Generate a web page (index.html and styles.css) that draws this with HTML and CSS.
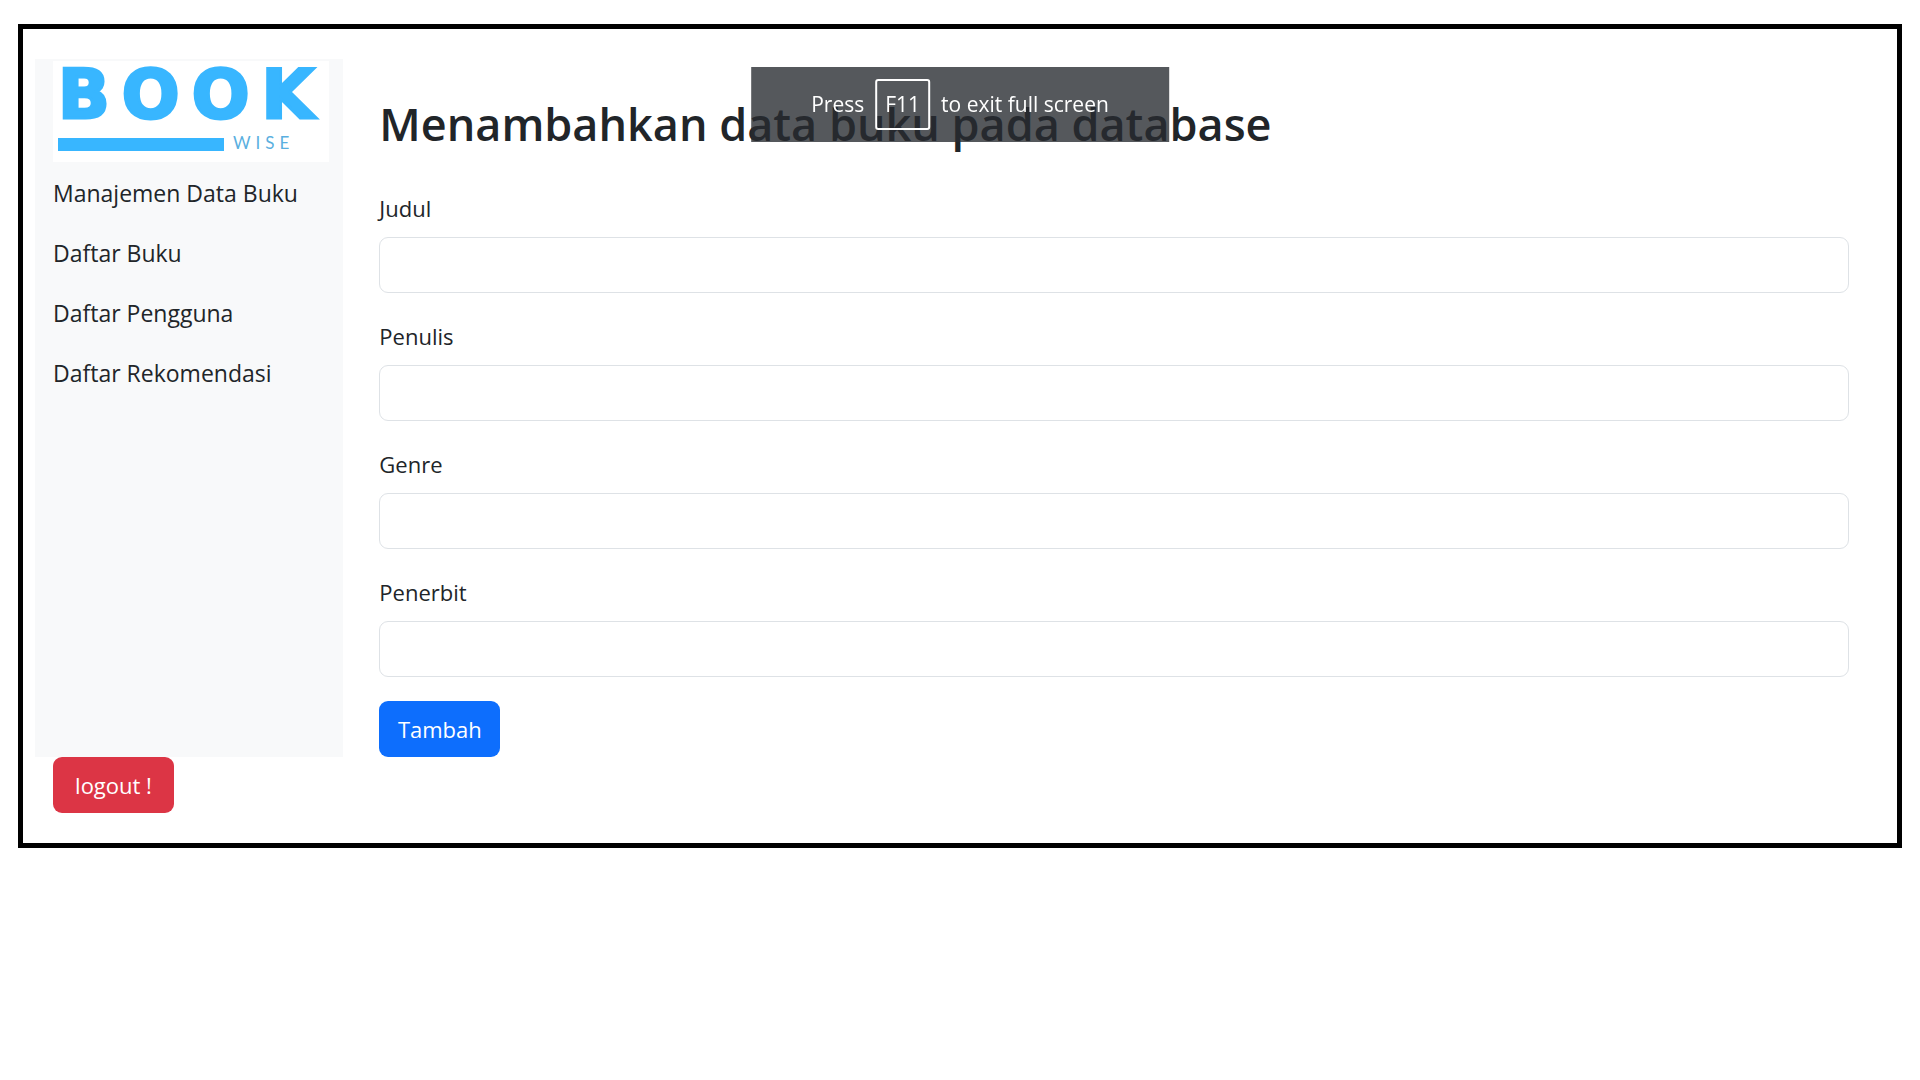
FILE: index.html
```html
<!DOCTYPE html>
<html lang="id">
<head>
<meta charset="utf-8">
<meta name="viewport" content="width=device-width, initial-scale=1">
<title>BookWise</title>
<link rel="stylesheet" href="styles.css">
</head>
<body>
<div class="frame">
  <div class="layout">
    <aside class="sidebar">
      <svg class="logo" viewBox="0 0 276 102" role="img" aria-label="Book Wise">
        <rect class="logo-back" width="276" height="101"/>
        <text class="logo-book" x="5" y="57">BOOK</text>
        <rect class="logo-bar" x="5" y="77" width="166" height="13"/>
        <text class="logo-wise" x="180" y="88">WISE</text>
      </svg>
      <nav class="menu">
        <a class="menu-link" href="#">Manajemen Data Buku</a>
        <a class="menu-link" href="#">Daftar Buku</a>
        <a class="menu-link" href="#">Daftar Pengguna</a>
        <a class="menu-link" href="#">Daftar Rekomendasi</a>
      </nav>
    </aside>
    <main class="content">
      <h1 class="title">Menambahkan data buku pada database</h1>
      <form class="form">
        <div class="field">
          <label class="label" for="judul">Judul</label>
          <input class="input" type="text" id="judul">
        </div>
        <div class="field">
          <label class="label" for="penulis">Penulis</label>
          <input class="input" type="text" id="penulis">
        </div>
        <div class="field">
          <label class="label" for="genre">Genre</label>
          <input class="input" type="text" id="genre">
        </div>
        <div class="field">
          <label class="label" for="penerbit">Penerbit</label>
          <input class="input" type="text" id="penerbit">
        </div>
        <button class="btn btn-primary" type="button">Tambah</button>
      </form>
    </main>
  </div>
  <div class="footer">
    <button class="btn btn-danger" type="button">logout !</button>
  </div>
</div>
<div class="notice">
  <span>Press</span><kbd class="key">F11</kbd><span>to exit full screen</span>
</div>
</body>
</html>
```
FILE: styles.css
```css
*, *::before, *::after {
  box-sizing: border-box;
}

body {
  margin: 0;
  background: #fff;
  color: #212529;
  font-family: "Segoe UI", "Open Sans", "Noto Sans", sans-serif;
  font-size: 22px;
  line-height: 36px;
}

.frame {
  margin: 24px 18px;
  padding: 30px 12px;
  border: 5px solid #000;
}

.layout {
  display: grid;
  grid-template-columns: 2fr 10fr;
}

.sidebar {
  padding: 2px 14px 0 18px;
  background: #f8f9fa;
}

.logo {
  display: block;
  width: 100%;
  max-width: 276px;
  overflow: visible;
}

.logo-back {
  fill: #fff;
}

.logo-book {
  fill: #38b6ff;
  stroke: #38b6ff;
  stroke-width: 3px;
  font-family: "DejaVu Sans", sans-serif;
  font-size: 68px;
  font-weight: 700;
  letter-spacing: 12px;
}

.logo-bar {
  fill: #38b6ff;
}

.logo-wise {
  fill: #5aafe0;
  font-family: Lato, sans-serif;
  font-size: 17px;
  letter-spacing: 5px;
}

.menu {
  display: flex;
  flex-direction: column;
  font-size: 23px;
}

.menu-link {
  padding: 12px 0;
  color: inherit;
  text-decoration: none;
}

.content {
  padding: 36px 36px 0;
}

.title {
  margin: 0 0 36px;
  font-size: 45px;
  font-weight: 600;
  line-height: 58px;
}

.field {
  margin-bottom: 24px;
}

.label {
  display: block;
  margin-bottom: 10px;
  line-height: 38px;
}

.input {
  display: block;
  width: 100%;
  height: 56px;
  padding: 9px 18px;
  border: 1px solid #dee2e6;
  border-radius: 9px;
  background: #fff;
  color: inherit;
  font: inherit;
}

.btn {
  display: block;
  min-width: 121px;
  padding: 10px 18px;
  border: 0;
  border-radius: 9px;
  color: #fff;
  font: inherit;
}

.btn-primary {
  background: #0d6efd;
}

.btn-danger {
  background: #dc3545;
}

.footer {
  padding: 0 18px;
}

.notice {
  position: fixed;
  top: 67px;
  left: 50%;
  display: flex;
  align-items: center;
  gap: 11px;
  padding: 12px 60px;
  background: rgba(39, 43, 48, 0.79);
  color: #fff;
  font-size: 21px;
  line-height: 35px;
  white-space: nowrap;
  transform: translateX(-50%);
}

.key {
  padding: 6px 8px;
  border: 2px solid #fff;
  border-radius: 3px;
  font: inherit;
}
```
